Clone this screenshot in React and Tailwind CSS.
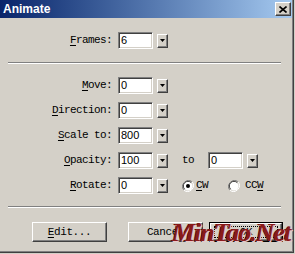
const MONO = { fontFamily: '"Liberation Mono", "DejaVu Sans Mono", monospace' }

function Ul({ children }) {
  return <span className="underline underline-offset-[2px]">{children}</span>
}

function Field({ value, w = 'w-[35px]' }) {
  return (
    <div className={`${w} h-[17px] bg-white border border-t-[#808080] border-l-[#808080] border-r-white border-b-white shadow-[inset_1px_1px_0_#404040,inset_-1px_-1px_0_#d4d0c8] flex items-center pl-[2px] text-[11px] text-black font-['Liberation_Sans',sans-serif] leading-none`}>
      {value}
    </div>
  )
}

function Drop() {
  return (
    <div className="w-[11px] h-[14px] bg-[#d4d0c8] border border-t-white border-l-white border-r-[#404040] border-b-[#404040] shadow-[inset_-1px_-1px_0_#808080] flex items-center justify-center">
      <svg width="5" height="3" viewBox="0 0 5 3"><path d="M0 0h5L2.5 3z" fill="#000" /></svg>
    </div>
  )
}

function Radio({ checked }) {
  return (
    <svg width="12" height="12" viewBox="0 0 12 12">
      <path d="M10.2 1.8A6 6 0 0 0 1.8 10.2" stroke="#808080" strokeWidth="1" fill="none" />
      <circle cx="6" cy="6" r="4.6" fill="#fff" />
      <path d="M9.3 2.7A4.6 4.6 0 0 0 2.7 9.3" stroke="#404040" strokeWidth="1" fill="none" />
      <path d="M1.8 10.2A6 6 0 0 0 10.2 1.8" stroke="#fff" strokeWidth="1" fill="none" />
      {checked && <circle cx="6" cy="6" r="2" fill="#000" />}
    </svg>
  )
}

function Row({ label, children }) {
  return (
    <div className="flex items-center h-[17px]">
      <div className="w-[112px] text-right text-[11px] tracking-[-0.6px] text-black leading-none" style={MONO}>{label}</div>
      <div className="ml-[6px]"><Field value={children[0]} /></div>
      <div className="ml-[4px]"><Drop /></div>
      {children[1]}
    </div>
  )
}

function Btn({ children, def }) {
  const inner = (
    <div className={`${def ? 'w-[72px] h-[18px]' : 'w-[75px] h-[20px]'} bg-[#d4d0c8] border border-t-white border-l-white border-r-[#404040] border-b-[#404040] shadow-[inset_-1px_-1px_0_#808080] flex items-center justify-center text-[11px] tracking-[-0.4px] text-black`} style={MONO}>
      {def ? <div className="w-[64px] h-[12px] border border-dotted border-black flex items-center justify-center">{children}</div> : children}
    </div>
  )
  return def ? <div className="border border-black">{inner}</div> : inner
}

export default function App() {
  return (
    <div className="relative w-[295px] h-[254px] bg-[#d4d0c8] overflow-hidden">
      <div className="w-[294px] h-[253px] border-r border-b border-[#404040]">
        <div className="w-[293px] h-[252px] border-r border-b border-[#808080] flex flex-col">
          <div className="h-[18px] bg-gradient-to-r from-[#0a246a] to-[#a6caf0] flex items-center justify-between pl-[3px] pr-[1px]">
            <span className="text-white font-bold text-[12px] leading-none font-['Liberation_Sans',sans-serif]">Animate</span>
            <div className="w-[16px] h-[14px] bg-[#d4d0c8] border border-t-white border-l-white border-r-[#404040] border-b-[#404040] shadow-[inset_-1px_-1px_0_#808080] flex items-center justify-center">
              <svg width="8" height="7" viewBox="0 0 8 7"><path d="M0.5 0.5l7 6M7.5 0.5l-7 6" stroke="#000" strokeWidth="1.6" /></svg>
            </div>
          </div>

          <div className="mt-[14px]">
            <Row label={<><Ul>F</Ul>rames:</>}>{['6', null]}</Row>
          </div>

          <div className="mt-[13px] ml-[8px] w-[273px] h-[2px] border-t border-[#808080] border-b border-b-white" />

          <div className="mt-[13px] flex flex-col gap-[8px]">
            <Row label={<><Ul>M</Ul>ove:</>}>{['0', null]}</Row>
            <Row label={<><Ul>D</Ul>irection:</>}>{['0', null]}</Row>
            <Row label={<><Ul>S</Ul>cale to:</>}>{['800', null]}</Row>
            <Row label={<><Ul>O</Ul>pacity:</>}>{['100',
              <div className="flex items-center" key="o">
                <span className="ml-[14px] text-[11px] tracking-[-0.6px] leading-none" style={MONO}>to</span>
                <div className="ml-[14px]"><Field value="0" /></div>
                <div className="ml-[4px]"><Drop /></div>
              </div>]}</Row>
            <Row label={<><Ul>R</Ul>otate:</>}>{['0',
              <div className="flex items-center" key="r">
                <div className="ml-[14px]"><Radio checked /></div>
                <span className="ml-[2px] text-[11px] tracking-[-0.6px] leading-none" style={MONO}><Ul>C</Ul>W</span>
                <div className="ml-[20px]"><Radio /></div>
                <span className="ml-[5px] text-[11px] tracking-[-0.6px] leading-none" style={MONO}>CC<Ul>W</Ul></span>
              </div>]}</Row>
          </div>

          <div className="mt-[12px] ml-[8px] w-[273px] h-[2px] border-t border-[#808080] border-b border-b-white" />

          <div className="mt-[14px] flex items-center">
            <div className="ml-[32px]"><Btn><Ul>E</Ul>dit...</Btn></div>
            <div className="ml-[21px]"><Btn>Cancel</Btn></div>
            <div className="ml-[6px]"><Btn def>OK</Btn></div>
          </div>
        </div>
      </div>

      {/* watermark over the buttons, as in the capture */}
      <div className="absolute left-[172px] top-[220px] text-[26px] italic font-bold leading-none text-[#8a1a1a] [text-shadow:1px_1px_0_#e8c8c8,-1px_0_0_#5a0c0c] font-['Liberation_Serif',serif] tracking-[-1px] pointer-events-none">
        MinTao.Net
      </div>
    </div>
  )
}
